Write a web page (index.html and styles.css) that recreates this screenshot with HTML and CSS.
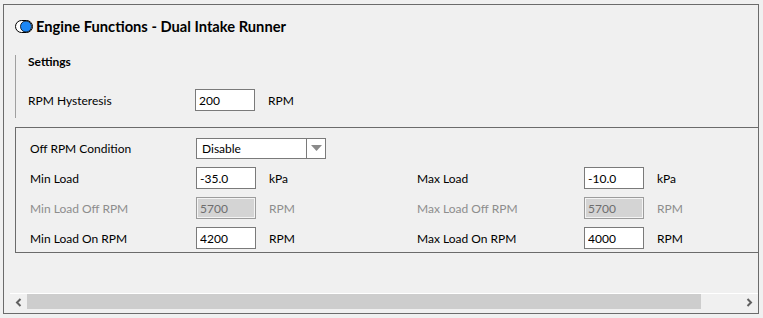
FILE: index.html
```html
<!DOCTYPE html>
<html lang="en">
<head>
    <meta charset="UTF-8">
    <title>Engine Functions - Dual Intake Runner</title>
    <link rel="stylesheet" href="styles.css">
</head>
<body>

<div class="frame">
    <div class="header">
        <svg class="toggle-icon" width="18" height="13" viewBox="0 0 18 13">
            <rect x="0.5" y="0.5" width="17" height="12" rx="6" fill="#ffffff" stroke="#000000"/>
            <circle cx="11" cy="6.5" r="5.5" fill="#1c87f5" stroke="#000000" stroke-width="0.8"/>
        </svg>
        <h1>Engine Functions - Dual Intake Runner</h1>
    </div>

    <div class="settings">
        <div class="section-title">Settings</div>
        <div class="hyst-row">
            <span class="label">RPM Hysteresis</span>
            <input class="field" type="text" value="200">
            <span class="unit">RPM</span>
        </div>
    </div>

    <div class="group">
        <div class="row">
            <span class="label">Off RPM Condition</span>
            <div class="combo">
                <span class="combo-text">Disable</span>
                <span class="combo-arrow">
                    <svg width="11" height="7" viewBox="0 0 11 7"><polygon points="0,0 11,0 5.5,6" fill="#8a8a8a"/></svg>
                </span>
            </div>
        </div>
        <div class="row">
            <span class="label">Min Load</span>
            <input class="field" type="text" value="-35.0">
            <span class="unit">kPa</span>
            <span class="label">Max Load</span>
            <input class="field" type="text" value="-10.0">
            <span class="unit">kPa</span>
        </div>
        <div class="row disabled">
            <span class="label">Min Load Off RPM</span>
            <input class="field" type="text" value="5700" disabled>
            <span class="unit">RPM</span>
            <span class="label">Max Load Off RPM</span>
            <input class="field" type="text" value="5700" disabled>
            <span class="unit">RPM</span>
        </div>
        <div class="row">
            <span class="label">Min Load On RPM</span>
            <input class="field" type="text" value="4200">
            <span class="unit">RPM</span>
            <span class="label">Max Load On RPM</span>
            <input class="field" type="text" value="4000">
            <span class="unit">RPM</span>
        </div>
    </div>

    <div class="hscroll">
        <span class="scroll-btn">
            <svg width="7" height="9" viewBox="0 0 7 9"><path d="M5.5 1 L2 4.5 L5.5 8" fill="none" stroke="#606060" stroke-width="2"/></svg>
        </span>
        <div class="scroll-track">
            <div class="scroll-thumb"></div>
        </div>
        <span class="scroll-btn">
            <svg width="7" height="9" viewBox="0 0 7 9"><path d="M1.5 1 L5 4.5 L1.5 8" fill="none" stroke="#606060" stroke-width="2"/></svg>
        </span>
    </div>
</div>

</body>
</html>
```

FILE: styles.css
```css
html, body {
    margin: 0;
    padding: 0;
    background-color: #f0f0f0;
}
body {
    font-family: Lato, "Open Sans", sans-serif;
    font-size: 12px;
    color: #000000;
    padding-top: 4px;
}
.frame {
    box-sizing: border-box;
    margin-left: 3px;
    width: 756px;
    height: 310px;
    border: 1px solid #6b6b6b;
    padding: 11px 0 3px 11px;
    display: flex;
    flex-direction: column;
    overflow: hidden;
}
.header {
    display: flex;
    align-items: center;
    height: 20px;
}
.toggle-icon {
    display: block;
    margin-right: 3px;
}
h1 {
    margin: 0;
    font-size: 14.7px;
    font-weight: bold;
    line-height: 20px;
}

/* Settings block */
.settings {
    margin-top: 19px;
    border-left: 1px solid #a0a0a0;
    padding: 0 0 7px 12px;
}
.section-title {
    font-weight: bold;
    line-height: 14px;
}
.hyst-row {
    display: grid;
    grid-template-columns: 167px 60px auto;
    align-items: center;
    margin-top: 20px;
    height: 22px;
}

/* Group box */
.group {
    margin-top: 9px;
    margin-right: -2px;
    border: 1px solid #6b6b6b;
    border-right: none;
    padding: 9px 0 3px 14px;
    display: flex;
    flex-direction: column;
    gap: 8px;
}
.row {
    display: grid;
    grid-template-columns: 166px 60px 161px 167px 60px auto;
    align-items: center;
    height: 22px;
}
.label {
    white-space: nowrap;
}
.unit {
    padding-left: 13px;
}
.field {
    box-sizing: border-box;
    width: 60px;
    height: 22px;
    margin: 0;
    padding: 0 3px;
    border: 1px solid #7a7a7a;
    background-color: #ffffff;
    font-family: Lato, "Open Sans", sans-serif;
    font-size: 12px;
    color: #000000;
    outline: none;
}
.disabled .label,
.disabled .unit {
    color: #8d8d8d;
}
.disabled .field {
    background-color: #d4d4d4;
    border-color: #9c9c9c;
    box-shadow: inset 0 0 0 1px #f4f4f4;
    color: #6e6e6e;
}

.combo {
    box-sizing: border-box;
    width: 130px;
    height: 21px;
    border: 1px solid #7a7a7a;
    background-color: #ffffff;
    display: flex;
    align-items: center;
}
.combo-text {
    flex: 1;
    padding-left: 5px;
}
.combo-arrow {
    width: 18px;
    height: 100%;
    border-left: 1px solid #7a7a7a;
    display: flex;
    align-items: center;
    justify-content: center;
}
.combo-arrow svg {
    display: block;
}

/* horizontal scrollbar */
.hscroll {
    margin-top: auto;
    margin-left: -5px;
    border-top: 1px solid #ffffff;
    height: 16px;
    display: flex;
    align-items: center;
}
.scroll-btn {
    width: 17px;
    height: 16px;
    display: flex;
    align-items: center;
    justify-content: center;
}
.scroll-btn svg {
    display: block;
}
.scroll-track {
    flex: 1;
    height: 16px;
}
.scroll-thumb {
    width: 674px;
    height: 15px;
    background-color: #cdcdcd;
}
```
